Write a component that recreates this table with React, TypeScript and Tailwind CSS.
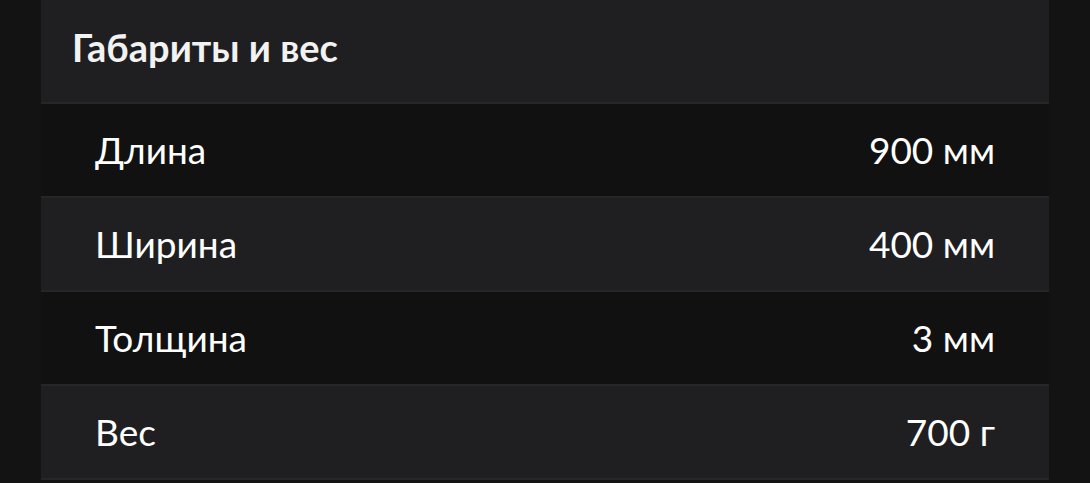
import React from "react";

const rows = [
  { label: "Длина", value: "900 мм" },
  { label: "Ширина", value: "400 мм" },
  { label: "Толщина", value: "3 мм" },
  { label: "Вес", value: "700 г" },
];

export default function App() {
  return (
    <div
      className="w-[1090px] h-[483px] bg-[#131313] px-[41px] overflow-hidden"
      style={{ fontFamily: 'Lato, "Noto Sans", sans-serif' }}
    >
      <div className="flex flex-col">
        <div className="h-[104px] flex items-center px-[31px] pb-[8px] bg-[#1f1f21] border-b-2 border-[#262629]">
          <h2 className="text-[38px] font-bold text-[#f2f2f2] leading-none">Габариты и вес</h2>
        </div>
        {rows.map((r, i) => (
          <div
            key={r.label}
            className={`h-[94px] flex items-center justify-between px-[54px] pb-[2px] border-b-2 border-[#262629] ${
              i % 2 === 0 ? "bg-[#111111]" : "bg-[#1f1f21]"
            }`}
          >
            <span className="text-[37px] text-white leading-none">{r.label}</span>
            <span className="text-[37px] text-white leading-none">{r.value}</span>
          </div>
        ))}
      </div>
    </div>
  );
}
